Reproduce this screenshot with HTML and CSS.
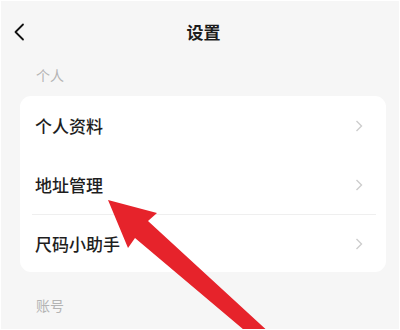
FILE: index.html
```html
<!DOCTYPE html>
<html lang="zh-CN">
<head>
<meta charset="utf-8">
<title>设置</title>
<link rel="stylesheet" href="styles.css">
</head>
<body>
<div class="page">
  <header class="topbar">
    <div class="back">
      <svg width="12" height="18" viewBox="0 0 12 18"><path d="M10 1.5 L2.5 9 L10 16.5" fill="none" stroke="#111" stroke-width="1.8" stroke-linecap="round" stroke-linejoin="round"/></svg>
    </div>
    <h1 class="title">设置</h1>
    <div class="spacer"></div>
  </header>

  <div class="section-label">个人</div>
  <div class="card">
    <div class="row"><span class="row-text">个人资料</span><svg class="chev" width="8" height="12" viewBox="0 0 8 12"><path d="M1.5 1 L6.5 6 L1.5 11" fill="none" stroke="#cdcdcd" stroke-width="1.4"/></svg></div>
    <div class="row"><span class="row-text">地址管理</span><svg class="chev" width="8" height="12" viewBox="0 0 8 12"><path d="M1.5 1 L6.5 6 L1.5 11" fill="none" stroke="#cdcdcd" stroke-width="1.4"/></svg></div>
    <div class="divider"></div>
    <div class="row row-last"><span class="row-text">尺码小助手</span><svg class="chev" width="8" height="12" viewBox="0 0 8 12"><path d="M1.5 1 L6.5 6 L1.5 11" fill="none" stroke="#cdcdcd" stroke-width="1.4"/></svg></div>
  </div>
  <div class="section-label section-label-2">账号</div>

  <svg class="pointer" width="400" height="330" viewBox="0 0 400 330">
    <polygon points="108,200 157,213 148,221 272,335 250,335 135,238 128,248" fill="#e6232b"/>
  </svg>
</div>
</body>
</html>
```

FILE: styles.css
```css
html, body {
  margin: 0;
  padding: 0;
  background: #ffffff;
}
body {
  font-family: "Noto Sans CJK SC", "Noto Sans", sans-serif;
}
.page {
  position: relative;
  width: 400px;
  height: 330px;
  box-sizing: border-box;
  border: 1px solid #ffffff;
  background: #f6f6f6;
  overflow: hidden;
}
.topbar {
  height: 61px;
  display: grid;
  grid-template-columns: 1fr auto 1fr;
  align-items: center;
}
.back {
  padding-left: 12px;
  display: flex;
  align-items: center;
}
.back svg {
  display: block;
}
.title {
  margin: 0;
  padding-left: 7px;
  font-size: 17px;
  font-weight: 600;
  color: #1c1c1c;
  line-height: 24px;
}
.section-label {
  margin-top: 3px;
  padding-left: 35px;
  font-size: 14px;
  line-height: 20px;
  color: #b4b4b4;
}
.section-label-2 {
  margin-top: 23px;
}
.card {
  margin: 11px 13px 0 19px;
  background: #ffffff;
  border-radius: 11px;
  display: flex;
  flex-direction: column;
}
.row {
  height: 59px;
  display: flex;
  align-items: center;
  justify-content: space-between;
  padding: 0 23px 0 15px;
}
.row-last {
  height: 57px;
}
.row-text {
  font-size: 17px;
  font-weight: 500;
  color: #1e1e1e;
}
.chev {
  display: block;
}
.divider {
  height: 1px;
  margin: 0 10px 0 12px;
  background: #efefef;
}
.pointer {
  position: absolute;
  left: -1px;
  top: -1px;
}
```
